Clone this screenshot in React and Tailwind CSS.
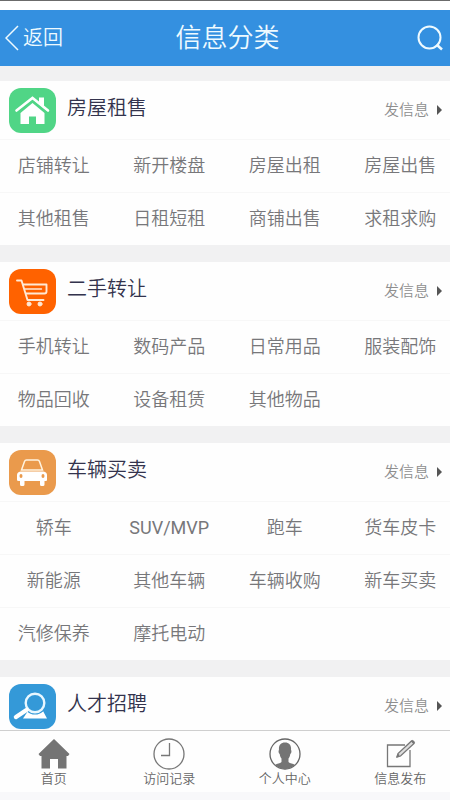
import React from 'react';
import clsx from 'clsx';

const HouseIcon = () => (
    <svg viewBox="0 0 47 45" className="w-full h-full" fill="#fff">
        <path d="M11.500 25 L23.500 15 L35.500 25 V36 H27 V28.500 H20 V36 H11.500 Z" />
        <path d="M30 9.500 H35 V18.500 L30 14.500 Z" />
        <path d="M7.500 22.500 L23.500 10 L39 22.500" fill="none" stroke="#fff" strokeWidth="2.600" strokeLinecap="round" />
        <path d="M9 24.500 L23.500 13 L37.500 24.500" fill="none" stroke="#50d586" strokeWidth="1.200" />
    </svg>
);

const CartIcon = () => (
    <svg viewBox="0 0 47 45" className="w-full h-full" fill="none" stroke="#ffe9d5" strokeWidth="1.900" strokeLinecap="round" strokeLinejoin="round">
        <path d="M8 11.500 H12.500 L18.500 31 H34.500" />
        <path d="M14 15.500 H37.500 V22.500 Q37.500 24.500 35.500 24.500 H17" />
        <path d="M16 20 H32.500" strokeWidth="1.400" />
        <circle cx="20" cy="35" r="2" fill="#ffe9d5" strokeWidth="1" />
        <circle cx="31" cy="35" r="2" fill="#ffe9d5" strokeWidth="1" />
    </svg>
);

const CarIcon = () => (
    <svg viewBox="0 0 47 45" className="w-full h-full" fill="#fff">
        <path d="M12.500 20 L15.500 11.500 Q16 10 17.500 10 H28.500 Q30 10 30.500 11.500 L33.500 20 Z" fill="none" stroke="#fff3df" strokeWidth="1.500" />
        <path d="M11.500 21.500 H34.500 Q38 22 38 25 V30 Q38 31 37 31 H35.500 V34.500 Q35.500 36 34 36 H32.500 Q31 36 31 34.500 V31 H15.500 V34.500 Q15.500 36 14 36 H12.500 Q11 36 11 34.500 V31 H9.500 Q8 31 8 30 V25 Q8 22 11.500 21.500 Z" />
        <ellipse cx="12" cy="26" rx="1.500" ry="2" fill="#ea9a4c" />
        <ellipse cx="34" cy="26" rx="1.500" ry="2" fill="#ea9a4c" />
    </svg>
);

const RecruitIcon = () => (
    <svg viewBox="0 0 47 45" className="w-full h-full">
        <path d="M14 34.500 L19 27 H34 L38 34.500 Z" fill="#fff" />
        <circle cx="26" cy="19" r="11.500" fill="#3499d8" />
        <circle cx="26" cy="19" r="9.300" fill="none" stroke="#e8f7ff" strokeWidth="2.400" />
        <path d="M17.500 26 L7 33" stroke="#fff" strokeWidth="4.500" strokeLinecap="round" />
    </svg>
);

const sections = [
    {
        title: '房屋租售',
        color: 'bg-[#50d586]',
        icon: HouseIcon,
        rows: [
            ['店铺转让', '新开楼盘', '房屋出租', '房屋出售'],
            ['其他租售', '日租短租', '商铺出售', '求租求购']
        ]
    },
    {
        title: '二手转让',
        color: 'bg-[#ff6200]',
        icon: CartIcon,
        rows: [
            ['手机转让', '数码产品', '日常用品', '服装配饰'],
            ['物品回收', '设备租赁', '其他物品']
        ]
    },
    {
        title: '车辆买卖',
        color: 'bg-[#ea9a4c]',
        icon: CarIcon,
        rows: [
            ['轿车', 'SUV/MVP', '跑车', '货车皮卡'],
            ['新能源', '其他车辆', '车辆收购', '新车买卖'],
            ['汽修保养', '摩托电动']
        ]
    },
    {
        title: '人才招聘',
        color: 'bg-[#3499d8]',
        icon: RecruitIcon,
        rows: []
    }
];

const HomeIcon = () => (
    <svg viewBox="0 0 32 32" className="w-8 h-8" fill="#747474">
        <path d="M16 1 L31.500 16 L30 18 H28.500 V30.500 H20 V21 H12 V30.500 H3.500 V18 H2 L0.500 16 Z" />
    </svg>
);

const ClockIcon = () => (
    <svg viewBox="0 0 32 32" className="w-8 h-8" fill="none" stroke="#777" strokeWidth="1.300">
        <circle cx="16" cy="16" r="15" />
        <path d="M16.500 5 V17.500 H8" />
    </svg>
);

const PersonIcon = () => (
    <svg viewBox="0 0 32 32" className="w-8 h-8">
        <circle cx="16" cy="16" r="15" fill="none" stroke="#666" strokeWidth="1.300" />
        <path d="M16 4.500 C20.500 4.500 22.500 7.500 22 12 C22.800 12.300 22.500 15.500 21.300 16 C21 18 20.300 19.500 19.500 20.500 V24 C21 25.500 24 25.500 26 27 C20 32.500 12 32.500 6 27 C8 25.500 11 25.500 12.500 24 V20.500 C11.700 19.500 11 18 10.700 16 C9.500 15.500 9.200 12.300 10 12 C9.500 7.500 11.500 4.500 16 4.500 Z" fill="#747474" />
    </svg>
);

const EditIcon = () => (
    <svg viewBox="0 0 32 32" className="w-8 h-8" fill="none" stroke="#777" strokeWidth="1.300">
        <path d="M21 7 H3.500 V28.500 H26 V12" />
        <path d="M13 19 L14 15.500 L27.500 3 L30 5.500 L16.500 18 Z" fill="#ddd" />
        <path d="M28 2.500 L30.500 5" strokeWidth="2" />
        <path d="M13 19 L15 16.500" strokeWidth="2" />
    </svg>
);

const tabs = [
    { label: '首页', icon: HomeIcon },
    { label: '访问记录', icon: ClockIcon },
    { label: '个人中心', icon: PersonIcon },
    { label: '信息发布', icon: EditIcon }
];

const isLatin = (text) => /^[A-Z/]+$/.test(text);

const Section = ({ section }) => (
    <section className="shrink-0 bg-[#fefefe] overflow-hidden">
        <div className="h-[58px] flex items-center pl-[9px] pr-2">
            <div className={`w-[47px] h-[45px] rounded-xl shrink-0 ${section.color}`}>
                <section.icon />
            </div>
            <h2 className="ml-[11px] text-[20px] leading-6 text-[#33334d] pb-1">{section.title}</h2>
            <a href="#" className="ml-auto flex items-center text-[15px] leading-6 text-[#8e8e8e]">
                发信息
                <svg viewBox="0 0 5 10" className="ml-2 w-[5px] h-[10px]" fill="#555">
                    <path d="M0 0 L5 5 L0 10 Z" />
                </svg>
            </a>
        </div>
        {section.rows.map((row) => (
            <div key={row[0]} className="h-[53px] grid grid-cols-4 items-center -ml-1 -mr-2 border-t border-[#f7f7f7]">
                {row.map((item) => (
                    <a
                        key={item}
                        href="#"
                        className={clsx('text-center text-[18px] leading-6 text-[#77777a]', isLatin(item) && 'font-normal')}
                    >
                        {item}
                    </a>
                ))}
            </div>
        ))}
    </section>
);

const App = () => (
    <div className="h-screen flex flex-col overflow-hidden bg-[#f1f1f2] font-[350] font-[Roboto,'Noto_Sans_CJK_SC',sans-serif]">
        <div className="h-[10px] shrink-0 bg-white border-t border-[#6b6b6b]" />
        <header className="h-14 shrink-0 grid grid-cols-3 items-center bg-[#3490e0] text-[#eefaff] pl-[5px] pr-[7px]">
            <button type="button" className="flex items-center text-[20px] leading-6">
                <svg viewBox="0 0 14 26" className="w-[14px] h-[26px] mr-1" fill="none" stroke="currentColor" strokeWidth="1.500">
                    <path d="M13 1 L1 13 L13 25" />
                </svg>
                返回
            </button>
            <h1 className="pl-[7px] text-[26px] leading-8 text-center whitespace-nowrap">信息分类</h1>
            <button type="button" aria-label="搜索" className="justify-self-end">
                <svg viewBox="0 0 26 26" className="w-[26px] h-[26px]" fill="none" stroke="currentColor" strokeWidth="2">
                    <circle cx="12.500" cy="12.500" r="11" />
                    <path d="M19.500 19.500 L25 24.500" strokeWidth="2.500" />
                </svg>
            </button>
        </header>

        <main className="flex-1 min-h-0 overflow-hidden pt-[15px] flex flex-col gap-[17px]">
            {sections.map((section) => (
                <Section key={section.title} section={section} />
            ))}
        </main>

        <nav className="shrink-0 bg-[#fefefe] border-t border-[#cfcfcf] overflow-hidden">
            <div className="grid grid-cols-4 -ml-1 -mr-2 pt-[7px] pb-1">
                {tabs.map((tab) => (
                    <a key={tab.label} href="#" className="flex flex-col items-center text-[13px] leading-[18px] text-[#666]">
                        <tab.icon />
                        {tab.label}
                    </a>
                ))}
            </div>
            <div className="h-2 bg-[#f8f8fa]" />
        </nav>
    </div>
);

export default App;
